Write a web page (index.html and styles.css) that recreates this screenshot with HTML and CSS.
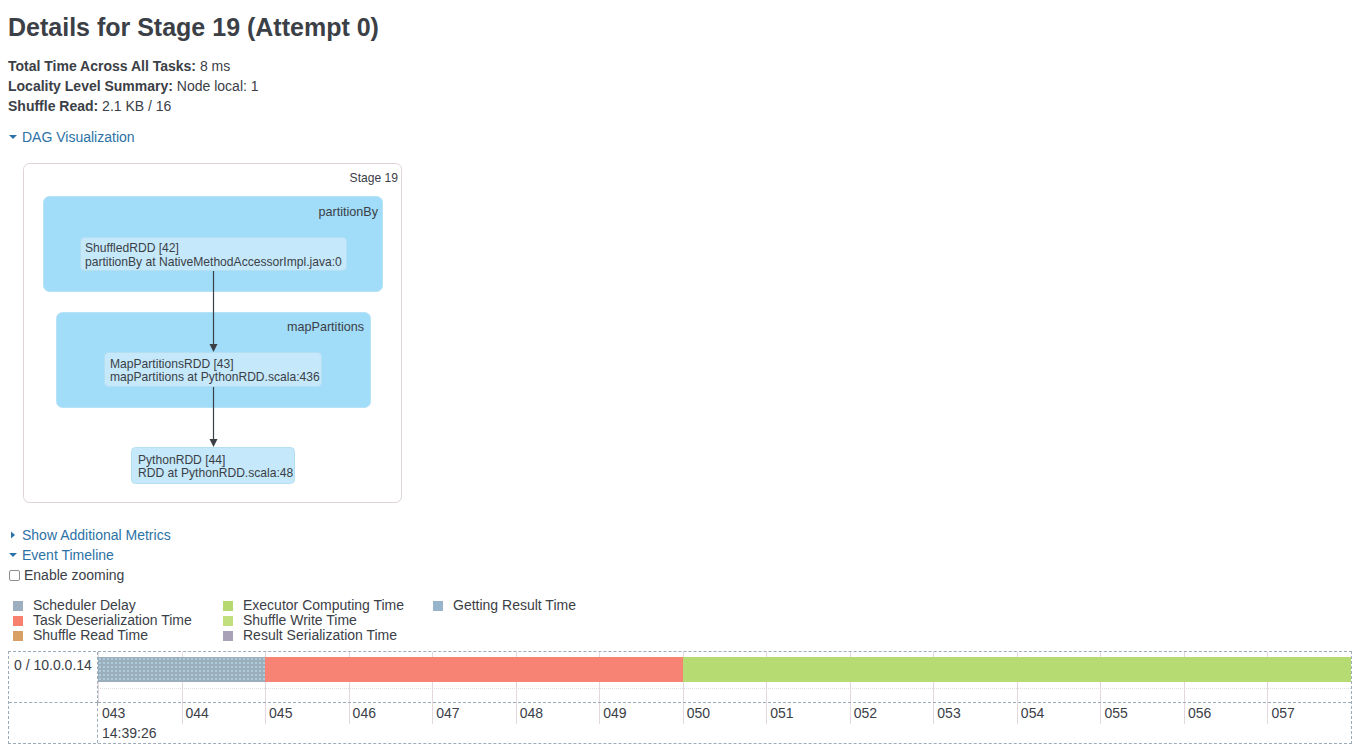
FILE: index.html
```html
<!DOCTYPE html>
<html>
<head>
<meta charset="utf-8">
<title>Stage 19</title>
<link rel="stylesheet" href="styles.css">
</head>
<body>
<div class="page">
  <h3 class="title">Details for Stage 19 (Attempt 0)</h3>
  <ul class="summary">
    <li><strong>Total Time Across All Tasks:</strong> 8 ms</li>
    <li><strong>Locality Level Summary:</strong> Node local: 1</li>
    <li><strong>Shuffle Read:</strong> 2.1 KB / 16</li>
  </ul>

  <a class="toggle toggle-dag" href="#"><svg class="arrow" width="8" height="8" viewBox="0 0 8 8"><path d="M0 2 L8 2 L4 6 Z"/></svg>DAG Visualization</a>

  <div class="dag">
    <svg width="380" height="341" viewBox="23 163 380 341">
      <rect class="stage-box" x="23.5" y="163.5" width="378" height="339" rx="6"/>
      <text class="lbl" x="398" y="182" text-anchor="end">Stage 19</text>

      <rect class="cluster" x="43.5" y="196.5" width="339" height="95" rx="6"/>
      <text class="lbl lbl-cluster" x="378" y="216" text-anchor="end">partitionBy</text>

      <rect class="cluster" x="56.5" y="312.5" width="314" height="95" rx="6"/>
      <text class="lbl lbl-cluster" x="364" y="331" text-anchor="end">mapPartitions</text>

      <rect class="node" x="80.5" y="237.5" width="266" height="33" rx="4"/>
      <text class="lbl" x="85" y="252">ShuffledRDD [42]</text>
      <text class="lbl" x="85" y="266">partitionBy at NativeMethodAccessorImpl.java:0</text>

      <rect class="node" x="104.5" y="352.5" width="217" height="34" rx="4"/>
      <text class="lbl" x="110" y="368">MapPartitionsRDD [43]</text>
      <text class="lbl" x="110" y="381">mapPartitions at PythonRDD.scala:436</text>

      <rect class="node" x="131.5" y="447.5" width="163" height="36" rx="4"/>
      <text class="lbl" x="138" y="464">PythonRDD [44]</text>
      <text class="lbl" x="138" y="477">RDD at PythonRDD.scala:48</text>

      <line class="edge" x1="213.5" y1="271" x2="213.5" y2="344"/>
      <path class="head" d="M209.5 344 L217.5 344 L213.5 352 Z"/>
      <line class="edge" x1="213.5" y1="387" x2="213.5" y2="439"/>
      <path class="head" d="M209.5 439 L217.5 439 L213.5 447 Z"/>
    </svg>
  </div>

  <a class="toggle toggle-metrics" href="#"><svg class="arrow" width="8" height="8" viewBox="0 0 8 8"><path d="M2 0.5 L6 4 L2 7.5 Z"/></svg>Show Additional Metrics</a>
  <a class="toggle" href="#"><svg class="arrow" width="8" height="8" viewBox="0 0 8 8"><path d="M0 2 L8 2 L4 6 Z"/></svg>Event Timeline</a>
  <label class="zoom"><input type="checkbox" class="check">Enable zooming</label>

  <div class="legend">
    <div class="legend-item"><span class="sw sw-sched"></span>Scheduler Delay</div>
    <div class="legend-item"><span class="sw sw-exec"></span>Executor Computing Time</div>
    <div class="legend-item"><span class="sw sw-result"></span>Getting Result Time</div>
    <div class="legend-item"><span class="sw sw-deser"></span>Task Deserialization Time</div>
    <div class="legend-item"><span class="sw sw-write"></span>Shuffle Write Time</div>
    <div class="legend-item"></div>
    <div class="legend-item"><span class="sw sw-read"></span>Shuffle Read Time</div>
    <div class="legend-item"><span class="sw sw-ser"></span>Result Serialization Time</div>
  </div>

  <div class="timeline">
    <div class="tl-label">0 / 10.0.0.14</div>
    <div class="tl-items">
      <div class="bars">
        <div class="bar bar-sched" style="width:13.3333%"></div>
        <div class="bar bar-deser" style="width:33.3333%"></div>
        <div class="bar bar-exec" style="width:53.3334%"></div>
      </div>
      <div class="bar-rule"></div>
    </div>
    <div class="tl-blank"></div>
    <div class="tl-axis">
      <div class="ticks">
        <span class="tick">043</span><span class="tick">044</span><span class="tick">045</span><span class="tick">046</span><span class="tick">047</span><span class="tick">048</span><span class="tick">049</span><span class="tick">050</span><span class="tick">051</span><span class="tick">052</span><span class="tick">053</span><span class="tick">054</span><span class="tick">055</span><span class="tick">056</span><span class="tick">057</span>
      </div>
      <div class="date">14:39:26</div>
    </div>
  </div>
</div>
</body>
</html>
```

FILE: styles.css
```css
html, body {
  margin: 0;
  padding: 0;
  background: #ffffff;
}

body {
  font-family: "Liberation Sans", Arial, Helvetica, sans-serif;
  font-size: 14px;
  line-height: 20px;
  color: #3b4047;
}

.page {
  padding: 0 11px 0 8px;
}

.title {
  margin: 7px 0 9px;
  font-size: 25px;
  line-height: 40px;
  font-weight: bold;
  color: #3b4047;
}

.summary {
  list-style: none;
  margin: 0;
  padding: 0;
}

.summary li {
  height: 20px;
}

.toggle {
  display: flex;
  align-items: center;
  height: 20px;
  color: #2c72a6;
  text-decoration: none;
}

.toggle .arrow {
  margin: 0 5px 0 1px;
  fill: #2c72a6;
}

.toggle-dag {
  margin-top: 11px;
}

.dag {
  margin: 16px 0 0 15px;
  width: 380px;
  height: 341px;
}

.dag svg {
  display: block;
}

.stage-box {
  fill: #ffffff;
  stroke: #ddd3d8;
  stroke-width: 1;
}

.cluster {
  fill: #a1dcf8;
  stroke: #b7e3f7;
  stroke-width: 1;
}

.node {
  fill: #c5e9fa;
  stroke: #b4dff3;
  stroke-width: 1;
}

.lbl {
  font-family: "Liberation Sans", Arial, Helvetica, sans-serif;
  font-size: 12.1px;
  fill: #3b4047;
}

.lbl-cluster {
  font-size: 12.6px;
}

.edge {
  stroke: #3b4047;
  stroke-width: 1.2;
}

.head {
  fill: #3b4047;
}

.toggle-metrics {
  margin-top: 21px;
}

.zoom {
  display: flex;
  align-items: center;
  height: 20px;
}

.check {
  -webkit-appearance: none;
  appearance: none;
  width: 11px;
  height: 11px;
  margin: 0 4px 0 1px;
  border: 1px solid #8f8f8f;
  border-radius: 2px;
  background: #fff;
}

.legend {
  display: grid;
  grid-template-columns: 210px 210px 210px;
  grid-auto-rows: 15px;
  margin: 13px 0 0 5px;
}

.legend-item {
  display: flex;
  align-items: center;
  height: 15px;
  line-height: 15px;
}

.sw {
  display: inline-block;
  width: 10px;
  height: 10px;
  margin-right: 10px;
}

.sw-sched  { background: #9dafbf; }
.sw-deser  { background: #f7806f; }
.sw-read   { background: #d8a064; }
.sw-exec   { background: #b5d96f; }
.sw-write  { background: #c2df80; }
.sw-ser    { background: #a9a2b6; }
.sw-result { background: #97b5ca; }

.timeline {
  display: grid;
  grid-template-columns: 89px 1fr;
  grid-template-rows: 51px 40px;
  margin-top: 8px;
  border: 1px dashed #9eabb8;
}

.tl-label {
  padding: 3px 0 0 5px;
  border-right: 1px dashed #9eabb8;
  border-bottom: 1px dashed #9eabb8;
}

.tl-items {
  border-bottom: 1px dashed #9eabb8;
  background: repeating-linear-gradient(to right, #e4d8de 0, #e4d8de 1px, transparent 1px, transparent calc(100% / 15));
  padding-top: 5px;
}

.bars {
  display: flex;
  height: 25px;
}

.bar {
  height: 25px;
}

.bar-sched {
  background-color: #9aaebc;
  background-image: radial-gradient(circle, #b7dcf0 0.6px, transparent 0.9px);
  background-size: 4px 4px;
}

.bar-deser { background: #f78375; }
.bar-exec  { background: #b6db72; }

.bar-rule {
  margin-top: 6px;
  border-top: 1px dotted #dcdee2;
}

.tl-blank {
  border-right: 1px dashed #9eabb8;
}

.tl-axis {
  display: flex;
  flex-direction: column;
}

.ticks {
  display: flex;
  height: 21px;
}

.tick {
  flex: 1 1 0;
  border-left: 1px solid #e4d8de;
  padding-left: 3px;
  line-height: 21px;
}

.tick:first-child {
  border-left-color: transparent;
}

.date {
  padding-left: 4px;
  line-height: 18px;
}
```
